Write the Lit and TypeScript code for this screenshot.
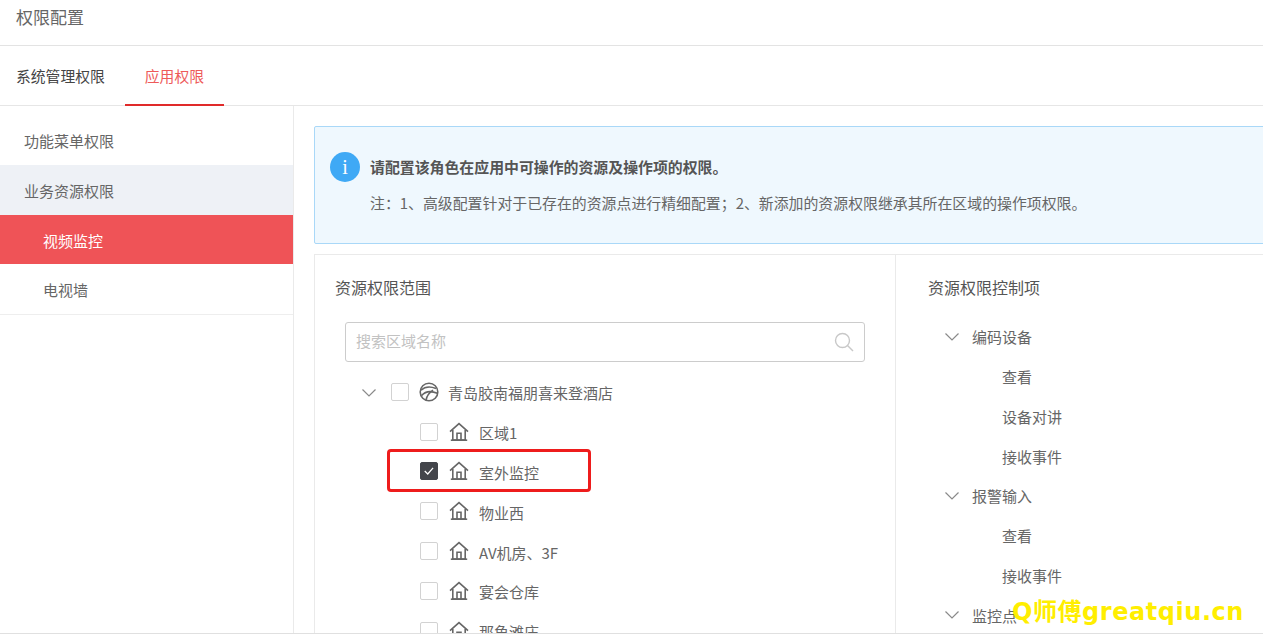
import { LitElement, html, css, svg } from "lit";
import { customElement } from "lit/decorators.js";

const chevron = html`<svg class="chev" width="16" height="16" viewBox="0 0 16 16"><path d="M1.5 4.5 8 11 14.5 4.5" fill="none" stroke="#8a8a8a" stroke-width="1.2"/></svg>`;
const house = html`<svg class="ico" width="20" height="20" viewBox="0 0 20 20" fill="none" stroke="#666" stroke-width="1.6"><path d="M1 9.6 10 1.6 19 9.6"/><path d="M3.8 8V18H16.2V8"/><path d="M1.8 18.2H18.2"/><path d="M8 18V11.2H12V18"/></svg>`;
const globe = html`<svg class="ico" width="20" height="20" viewBox="0 0 20 20" fill="none" stroke="#666" stroke-width="1.6"><circle cx="10" cy="10" r="8.8"/><path d="M2 8.2C6 4.5 11 4 17 6.5"/><path d="M2.6 13.6C6 9.5 12 8.6 18.4 11.2"/><path d="M7 18C8 13.5 10.5 10.5 14 8.2"/></svg>`;
const check = svg`<path d="M4.2 9 7.6 12.4 13.6 5.4" fill="none" stroke="#fff" stroke-width="1.4"/>`;

const areas = ["区域1", "室外监控", "物业西", "AV机房、3F", "宴会仓库", "那鱼滩庄"];
const controls: [string, number][] = [
  ["编码设备", 0], ["查看", 1], ["设备对讲", 1], ["接收事件", 1],
  ["报警输入", 0], ["查看", 1], ["接收事件", 1], ["监控点", 0],
];

@customElement("app-root")
export class AppRoot extends LitElement {
  static styles = css`
    :host {
      display: block;
      width: 1263px;
      height: 642px;
      overflow: hidden;
      position: relative;
      background: #fff;
      font-family: "Noto Sans CJK SC", "Liberation Sans", sans-serif;
      font-size: 15px;
      color: #666;
    }
    .page { display: flex; flex-direction: column; height: 642px; }
    .head {
      height: 45px; flex: none; box-sizing: content-box;
      border-bottom: 1px solid #e3e3e3;
      padding-left: 16px; font-size: 17px; line-height: 33px; color: #666;
    }
    .tabs {
      height: 59px; flex: none; display: flex;
      border-bottom: 1px solid #e6e6e6;
      padding-left: 16px; font-size: 14.8px;
    }
    .tab { line-height: 60px; color: #444; }
    .tab.on {
      margin-left: 20px; padding: 0 20px; color: #ee5a5a;
      border-bottom: 2px solid #e02a2a; height: 58px; margin-bottom: -1px;
    }
    .body { flex: 1; display: flex; min-height: 0; overflow: hidden; }
    .side {
      width: 293px; flex: none; border-right: 1px solid #eaeaea;
      padding-top: 9.9px; box-sizing: content-box;
    }
    .side .list { border-bottom: 1px solid #eee; }
    .item { height: 49.5px; line-height: 51px; padding-left: 24px; color: #666; }
    .item:first-child { line-height: 49px; }
    .item.sub { padding-left: 43px; }
    .item.group { background: #eef1f6; }
    .item.on { background: #ef5357; color: #fff; }
    .main { flex: 1; min-width: 0; padding: 20px 0 0 20px; overflow: hidden; }
    .alert {
      width: 1000px; height: 118px; box-sizing: border-box;
      border: 1px solid #a9d8f8; border-radius: 2px; background: #eff8fe;
      display: flex; align-items: flex-start; padding: 25px 0 0 15px; gap: 10px;
    }
    .info {
      width: 30px; height: 30px; border-radius: 50%; background: #3fa9f5; color: #fff;
      font-family: "Liberation Serif", serif; font-size: 20px; line-height: 30px; text-align: center; flex: none;
    }
    .alert-title { font-size: 14.9px; font-weight: 700; color: #555; line-height: 30px; }
    .alert-note { font-size: 14.9px; color: #666; line-height: 20px; margin-top: 11px; white-space: nowrap; }
    .panel {
      width: 1000px; margin-top: 10px; height: 400px;
      border: 1px solid #eaeaea; border-bottom: 0; display: flex;
    }
    .left { width: 581px; flex: none; border-right: 1px solid #eaeaea; padding: 22px 0 0 20px; box-sizing: border-box; }
    .right { flex: 1; padding: 22px 0 0 32px; }
    .title { font-size: 16px; line-height: 20px; color: #555; }
    .search {
      width: 520px; height: 40px; box-sizing: border-box; margin: 25px 0 11px 10px;
      border: 1px solid #ccc; border-radius: 3px; display: flex; align-items: center;
      justify-content: space-between; padding: 0 10px 0 10px; color: #c2c2c2; font-size: 15px;
    }
    .search span { margin-top: -4px; }
    .row { height: 39.8px; display: flex; align-items: center; white-space: nowrap; font-size: 15px; color: #666; }
    .row.root { padding-left: 26px; }
    .row.leaf { padding-left: 85px; }
    .chev { flex: none; }
    .box {
      width: 18px; height: 18px; box-sizing: border-box; border: 1px solid #d2d2d2; border-radius: 2px;
      background: #fff; flex: none; margin-top: -2px; display: block;
    }
    .box.checked { background: #43454b; border-color: #43454b; }
    .row.root .box { margin-left: 14px; }
    .ico { flex: none; margin: -2px 10px 0 11px; }
    .row.root .ico { margin: -2px 9px 0 10px; }
    .ctl { margin-top: 20px; }
    .cr { height: 39.75px; display: flex; align-items: center; font-size: 15px; color: #666; white-space: nowrap; }
    .cr.top { padding-left: 16px; gap: 12px; }
    .cr.child { padding-left: 74px; }
    .foot { height: 8px; flex: none; background: #fff; border-top: 1px solid #e0e0e0; }
    .mark {
      position: absolute; left: 1012px; top: 594px; color: #ffee00; font-size: 24px; font-weight: 700;
      line-height: 36px; letter-spacing: 0.55px; white-space: nowrap;
      font-family: "DejaVu Sans", "Noto Sans CJK SC", sans-serif;
    }
    .callout {
      position: absolute; left: 387px; top: 449px; width: 204px; height: 43px; box-sizing: border-box;
      border: 3px solid #ee1c1c; border-radius: 4px;
    }
  `;

  render() {
    return html`
      <div class="page">
        <div class="head">权限配置</div>
        <div class="tabs">
          <div class="tab">系统管理权限</div>
          <div class="tab on">应用权限</div>
        </div>
        <div class="body">
          <div class="side">
            <div class="list">
              <div class="item">功能菜单权限</div>
              <div class="item group">业务资源权限</div>
              <div class="item sub on">视频监控</div>
              <div class="item sub">电视墙</div>
            </div>
          </div>
          <div class="main">
            <div class="alert">
              <div class="info">i</div>
              <div>
                <div class="alert-title">请配置该角色在应用中可操作的资源及操作项的权限。</div>
                <div class="alert-note">注：1、高级配置针对于已存在的资源点进行精细配置；2、新添加的资源权限继承其所在区域的操作项权限。</div>
              </div>
            </div>
            <div class="panel">
              <div class="left">
                <div class="title">资源权限范围</div>
                <div class="search">
                  <span>搜索区域名称</span>
                  <svg width="20" height="20" viewBox="0 0 20 20" fill="none" stroke="#c8c8c8" stroke-width="1.4"><circle cx="8.5" cy="8.5" r="7"/><path d="M13.5 13.5 19 19"/></svg>
                </div>
                <div class="row root">${chevron}<span class="box"></span>${globe}<span>青岛胶南福朋喜来登酒店</span></div>
                ${areas.map(
                  (a, i) => html`<div class="row leaf">
                    <svg class="box ${i === 1 ? "checked" : ""}" viewBox="0 0 18 18">${i === 1 ? check : ""}</svg>
                    ${house}<span>${a}</span>
                  </div>`
                )}
              </div>
              <div class="right">
                <div class="title">资源权限控制项</div>
                <div class="ctl">
                  ${controls.map(([t, lv]) =>
                    lv
                      ? html`<div class="cr child">${t}</div>`
                      : html`<div class="cr top">${chevron}<span>${t}</span></div>`
                  )}
                </div>
              </div>
            </div>
          </div>
        </div>
        <div class="foot"></div>
      </div>
      <div class="callout"></div>
      <div class="mark">Q师傅greatqiu.cn</div>
    `;
  }
}
